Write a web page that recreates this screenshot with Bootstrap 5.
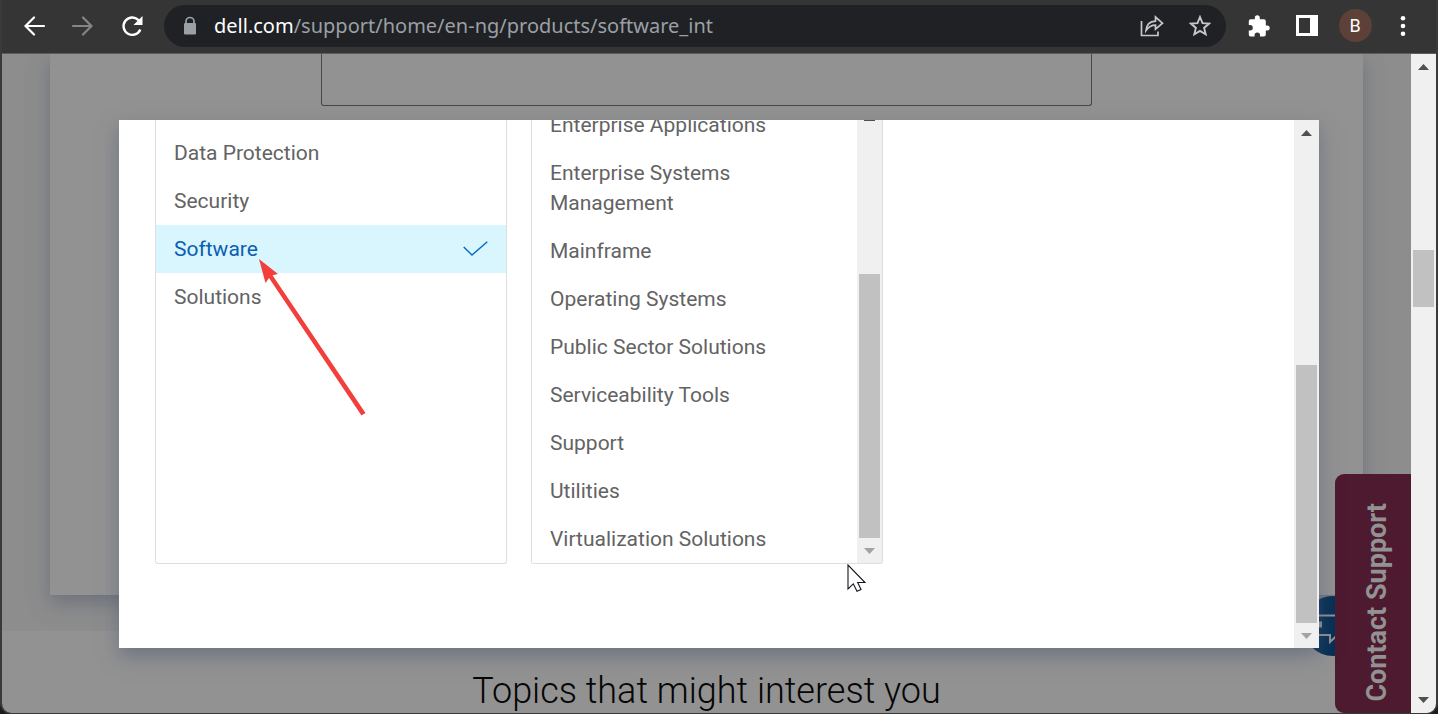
<!DOCTYPE html>
<html lang="en">
<head>
<meta charset="utf-8">
<meta name="viewport" content="width=device-width, initial-scale=1">
<title>Dell Support</title>
<link href="https://cdn.jsdelivr.net/npm/bootstrap@5.3.0/dist/css/bootstrap.min.css" rel="stylesheet">
<style>
body { background: #1c1c1c; font-family: Roboto, sans-serif; font-size: 21px; line-height: 30px; }
.browser { height: 100vh; border: solid #3a3a3a; border-width: 0 2px 1px; border-radius: 0 0 11px 11px; }
.toolbar { height: 54px; background: #353535; border-bottom: 1px solid #5c5c5c; padding: 0 9px 2px 12px; }
.tool { width: 48px; height: 42px; padding: 0; border: 0; background: none; color: #fff; display: flex; align-items: center; justify-content: center; flex: none; }
.tool svg, .omni svg { display: block; }
.nav-tool { width: 42px; }
.nav-tool + .nav-tool { width: 52px; }
.nav-tool.faded { color: #858585; }
.omni { height: 42px; background: #202124; border-radius: 21px; padding: 0 2px 0 18px; margin-left: 8px; margin-right: 9px; }
.omni .tool { color: #c7c7c7; }
.url { font-family: "Noto Sans", sans-serif; font-size: 20px; color: #9aa0a6; white-space: nowrap; }
.url b { font-weight: 400; color: #fff; }
.avatar { width: 33px; height: 33px; border-radius: 50%; background: #5d4037; font-size: 18px; line-height: 33px; text-align: center; }
.viewport { background: #929292; min-height: 0; }
.hero { background: #8d8d8d; height: 577px; padding: 0 48px; }
.panel { background: #929292; height: 541px; box-shadow: 0 8px 18px rgba(80, 88, 108, .5); }
.field { width: 771px; height: 52px; background: none; border: 1px solid #484848; border-top: 0; border-radius: 0 0 3px 3px; resize: none; }
.topics { font-size: 36px; font-weight: 300; line-height: 44px; color: #060606; padding-top: 38px; }
.track { width: 25px; background: #f0f0f0; position: relative; display: flex; flex-direction: column; align-items: center; flex: none; }
.thumb { width: 21px; background: #c1c1c1; }
.arrow-cell { height: 26px; display: flex; align-items: center; flex: none; }
.arrow-cell.short { height: 25px; }
.dialog-wrap { position: absolute; top: 120px; left: 0; right: 0; pointer-events: none; }
.picker { width: 84%; max-width: 1200px; height: 528px; background: #fff; box-shadow: 0 8px 18px rgba(80, 92, 115, .55); position: relative; }
.picker-body { padding: 0 36px 84px; gap: 24px; }
.box { width: 352px; border: 1px solid #dedede; border-top: 0; border-radius: 0 0 3px 3px; overflow: hidden; }
.choice { padding: 9px 18px; border: 0; background: #fff; color: #636363; text-align: left; flex: none; display: flex; justify-content: space-between; align-items: center; }
.choice.chosen { background: #d9f5fd; color: #0b5eb4; }
.cats { padding-top: 9px; }
.pointer-mark { position: absolute; left: 137px; top: 136px; }
.cursor { position: absolute; left: 728px; top: 444px; }
.contact { position: absolute; right: 0; bottom: 0; width: 76px; height: 239px; background: #4d1a30; color: #929292; border: 0; border-radius: 9px 0 0 9px; font-size: 27px; font-weight: 700; padding: 18px 0 0 8px; }
.contact span { writing-mode: vertical-rl; transform: rotate(180deg); white-space: nowrap; line-height: 30px; }
.chat { position: absolute; right: 48px; bottom: 57px; width: 60px; height: 60px; border: 0; padding: 0; border-radius: 50%; background: #062f55; color: #929292; }
</style>
</head>
<body>
<div class="browser d-flex flex-column overflow-hidden position-relative">
  <header class="toolbar d-flex align-items-center">
    <button class="tool nav-tool" aria-label="Back"><svg width="22" height="20" viewBox="0 0 22 20" fill="none" stroke="currentColor" stroke-width="2.2" stroke-linecap="round"><path d="M20 10H2M10 1.500L1.500 10L10 18.500"/></svg></button>
    <button class="tool nav-tool faded" aria-label="Forward"><svg width="22" height="20" viewBox="0 0 22 20" fill="none" stroke="currentColor" stroke-width="2.200" stroke-linecap="round"><path d="M2 10H20M12 1.500L20.500 10L12 18.500"/></svg></button>
    <button class="tool" aria-label="Reload"><svg width="22" height="22" viewBox="0 0 22 22"><path d="M19.300 14.500A8.700 8.700 0 1 1 17.200 4.800L18.500 6" fill="none" stroke="currentColor" stroke-width="2.400"/><path d="M21.500 1V10H12.500Z" fill="currentColor"/></svg></button>
    <div class="omni d-flex align-items-center flex-fill">
      <svg width="16" height="20" viewBox="0 0 16 20"><path d="M4 8V5.500a4 4 0 0 1 8 0V8" fill="none" stroke="#9aa0a6" stroke-width="1.700"/><rect x="2" y="7" width="12" height="11.500" rx="1.200" fill="#9aa0a6"/></svg>
      <div class="url ms-3 flex-fill"><b>dell.com</b>/support/home/en-ng/products/software_int</div>
      <button class="tool" aria-label="Share"><svg width="24" height="22" viewBox="0 0 24 22" fill="none" stroke="currentColor" stroke-width="1.700"><path d="M1.500 6V20.500H18V16.500"/><path d="M6 15.500C6.500 9.500 10 6.500 15.500 6.200V2L22.500 8.200L15.500 14.200V10.200C11 10.200 8.500 12 6 15.500Z"/></svg></button>
      <button class="tool" aria-label="Bookmark"><svg width="22" height="21" viewBox="0 0 22 21"><path d="M11 2L13.500 8.100L20.200 8.600L15.100 12.900L16.700 19.300L11 15.900L5.300 19.300L6.900 12.900L1.800 8.600L8.500 8.100Z" fill="none" stroke="currentColor" stroke-width="1.900"/></svg></button>
    </div>
    <button class="tool" aria-label="Extensions"><svg width="22" height="22" viewBox="0 0 22 22"><path d="M19.200 10.500H17.800V6.200A2 2 0 0 0 15.800 4.200H11.800V2.800A2.500 2.500 0 0 0 6.800 2.800V4.200H2.600A2 2 0 0 0 .8 6.200V10H2.100A2.700 2.700 0 0 1 2.100 15.400H.8V19.500A2 2 0 0 0 2.600 21.500H6.600V20.100A2.700 2.700 0 0 1 12 20.100V21.500H15.800A2 2 0 0 0 17.800 19.500V15.500H19.200A2.500 2.500 0 0 0 19.200 10.500Z" fill="currentColor"/></svg></button>
    <button class="tool" aria-label="Side panel"><svg width="22" height="21" viewBox="0 0 22 21"><path fill-rule="evenodd" d="M0 0H22V21H0ZM3 3V18H14V3Z" fill="currentColor"/></svg></button>
    <button class="tool" aria-label="Profile"><span class="avatar">B</span></button>
    <button class="tool" aria-label="Menu"><svg width="6" height="20" viewBox="0 0 6 20" fill="currentColor"><circle cx="3" cy="2.300" r="2.300"/><circle cx="3" cy="10" r="2.300"/><circle cx="3" cy="17.700" r="2.300"/></svg></button>
  </header>

  <div class="viewport d-flex flex-fill">
    <main class="flex-fill position-relative overflow-hidden">
      <section class="hero"><div class="panel d-flex justify-content-center align-items-start"><textarea class="field" aria-label="Product description"></textarea></div></section>
      <h2 class="topics text-center m-0">Topics that might interest you</h2>
      <button class="chat" aria-label="Chat"><svg width="60" height="60" viewBox="0 0 60 60" fill="none" stroke="currentColor" stroke-width="2"><path d="M8 19.500H40V39H34.500L27 46V39H8Z"/><path d="M17.500 25.500V31.500" stroke-width="3"/></svg></button>
      <button class="contact d-flex justify-content-center align-items-center"><span>Contact Support</span></button>
    </main>
    <div class="track">
      <div class="arrow-cell"><svg width="11" height="6"><path d="M5.500 0L11 6H0Z" fill="#505050"/></svg></div>
      <div class="thumb" style="margin-top:170px;height:57px"></div>
      <div class="arrow-cell mt-auto"><svg width="11" height="6"><path d="M0 0H11L5.500 6Z" fill="#505050"/></svg></div>
    </div>
  </div>

  <div class="dialog-wrap d-flex justify-content-center">
    <div class="picker d-flex pe-auto" role="dialog" aria-label="Choose a product">
      <div class="picker-body d-flex flex-fill">
        <div class="box cats d-flex flex-column">
          <button class="choice">Data Protection</button>
          <button class="choice">Security</button>
          <button class="choice chosen">Software<svg width="25" height="16" viewBox="0 0 25 16" fill="none" stroke="#0b6bc4" stroke-width="1.500"><path d="M.7 6L9 14L24.300 .8"/></svg></button>
          <button class="choice">Solutions</button>
        </div>
        <div class="box d-flex">
          <div class="d-flex flex-column justify-content-end flex-fill">
            <button class="choice">Enterprise Applications</button>
            <button class="choice">Enterprise Systems<br>Management</button>
            <button class="choice">Mainframe</button>
            <button class="choice">Operating Systems</button>
            <button class="choice">Public Sector Solutions</button>
            <button class="choice">Serviceability Tools</button>
            <button class="choice">Support</button>
            <button class="choice">Utilities</button>
            <button class="choice">Virtualization Solutions</button>
          </div>
          <div class="track">
            <svg width="11" height="1"><path d="M0 0H11V1H0Z" fill="#505050"/></svg>
            <div class="thumb mt-auto" style="height:264px"></div>
            <div class="arrow-cell short"><svg width="11" height="6"><path d="M0 0H11L5.500 6Z" fill="#a3a3a3"/></svg></div>
          </div>
        </div>
      </div>
      <div class="track">
        <div class="arrow-cell"><svg width="11" height="6"><path d="M5.500 0L11 6H0Z" fill="#505050"/></svg></div>
        <div class="thumb mt-auto" style="height:258px"></div>
        <div class="arrow-cell short"><svg width="11" height="6"><path d="M0 0H11L5.500 6Z" fill="#a3a3a3"/></svg></div>
      </div>
      <svg class="pointer-mark" width="112" height="164" viewBox="0 0 112 164"><path d="M3 3L22 18L16.500 19.300L109.500 157L105.500 159.500L13 22L9.500 27Z" fill="#f23f3c"/></svg>
      <svg class="cursor" width="20" height="29" viewBox="0 0 20 29"><path d="M1 1V25L6.300 19.800L10 27.300L14 25.500L10.700 18.500H18Z" fill="#fff" stroke="#15151f" stroke-width="1.100"/></svg>
    </div>
  </div>
</div>
<script src="https://cdn.jsdelivr.net/npm/bootstrap@5.3.0/dist/js/bootstrap.bundle.min.js"></script>
</body>
</html>
